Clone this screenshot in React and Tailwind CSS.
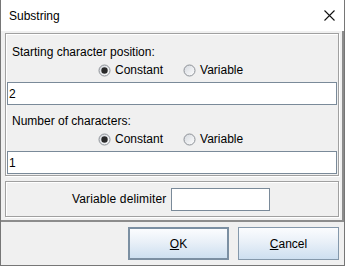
import React from "react";

const Radio = ({ checked }) => (
  <svg width="13" height="13" viewBox="0 0 13 13" className="shrink-0">
    <defs>
      <linearGradient id="rg" x1="0" y1="0" x2="1" y2="1">
        <stop offset="0" stopColor="#d4d8de" />
        <stop offset="1" stopColor="#ffffff" />
      </linearGradient>
    </defs>
    <circle cx="6.5" cy="6.5" r="5.5" fill="url(#rg)" stroke="#8c9096" strokeWidth="1" />
    {checked && <circle cx="6.5" cy="6.5" r="3.2" fill="#2a2a2a" />}
  </svg>
);

const RadioRow = () => (
  <div className="h-[20px] flex items-center pl-[92px]">
    <div className="flex items-center gap-[4px]">
      <Radio checked />
      <span>Constant</span>
    </div>
    <div className="flex items-center gap-[4px] ml-[20px]">
      <Radio />
      <span>Variable</span>
    </div>
  </div>
);

const Field = ({ value }) => (
  <div className="h-[23px] mx-[1px] bg-white border border-[#7a8a99] flex items-center pl-[1px] leading-none">
    {value}
  </div>
);

const Block = ({ label, value, first }) => (
  <div className={first ? "pt-[10px]" : "pt-[8px]"}>
    <div className="h-[16px] leading-[16px] pl-[6px]">{label}</div>
    <RadioRow />
    <div className="mt-[2px]">
      <Field value={value} />
    </div>
  </div>
);

const Btn = ({ children, def }) => (
  <div
    className={
      "w-[101px] h-[33px] flex items-center justify-center bg-[linear-gradient(#fbfcfe,#e9f0f8_45%,#cddff0)] " +
      (def ? "border-2 border-[#7b8fa2]" : "border border-[#8498ab]")
    }
  >
    {children}
  </div>
);

export default function App() {
  return (
    <div className="w-[345px] h-[266px] bg-white font-['Liberation_Sans',Arial,sans-serif] text-[12px] text-black overflow-hidden">
      <div className="h-full flex flex-col border-x border-b border-[#767676]">
        <div className="h-[31px] shrink-0 flex items-center justify-between pl-[8px] pr-[9px]">
          <span className="leading-[16px]">Substring</span>
          <svg width="11" height="11" viewBox="0 0 11 11">
            <path d="M0.5 0.5 L10.5 10.5 M10.5 0.5 L0.5 10.5" stroke="#111" strokeWidth="1.1" fill="none" />
          </svg>
        </div>
        <div className="flex-1 bg-[#f0f0f0] flex flex-col">
          <div className="h-[191px] shrink-0 border-r-2 border-b-2 border-[#8c8c8c] pt-[2px]">
            <div className="ml-[4px] w-[334px] h-[143px] border border-[#a0a0a0] shadow-[inset_1px_1px_0_#ffffff,1px_1px_0_#ffffff]">
              <Block first label="Starting character position:" value="2" />
              <Block label="Number of characters:" value="1" />
            </div>
            <div className="ml-[4px] mt-[5px] w-[334px] h-[36px] border border-[#a0a0a0] shadow-[inset_1px_1px_0_#ffffff,1px_1px_0_#ffffff] flex items-center pl-[66px] gap-[4px]">
              <span className="tracking-[0.15px]">Variable delimiter</span>
              <div className="w-[99px] h-[23px] bg-white border border-[#7a8a99]" />
            </div>
          </div>
          <div className="flex-1 flex items-start justify-end gap-[9px] pt-[5px] pr-[5px]">
            <Btn def>
              <span><span className="underline">O</span>K</span>
            </Btn>
            <Btn>
              <span><span className="underline">C</span>ancel</span>
            </Btn>
          </div>
        </div>
      </div>
    </div>
  );
}
